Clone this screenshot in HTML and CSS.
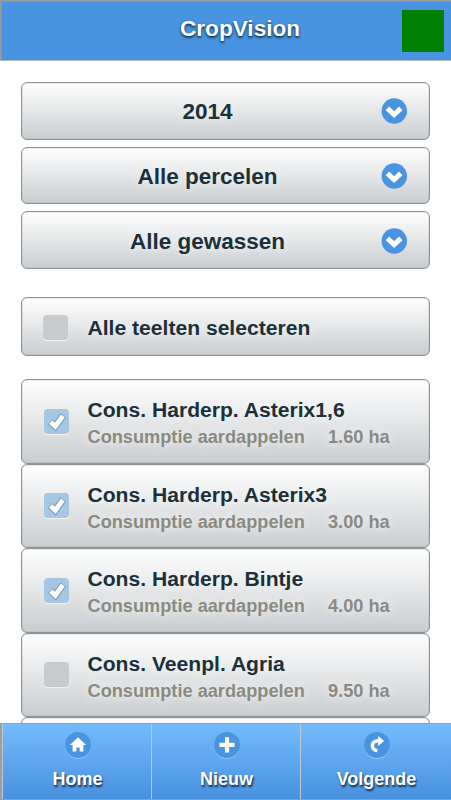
FILE: index.html
```html
<!DOCTYPE html>
<html lang="nl">
<head>
<meta charset="utf-8">
<title>CropVision</title>
<link rel="stylesheet" href="styles.css">
</head>
<body>
<svg class="defs" width="0" height="0">
  <symbol id="chevron" viewBox="0 0 26 26"><circle cx="13.3" cy="13" r="12.7" fill="#4894e0"/><path d="M6.4 10.4l6.7 6.2 6.7-6.2" fill="none" stroke="#fff" stroke-width="5"/></symbol>
  <symbol id="tick" viewBox="0 0 26 26"><path d="M6.4 12.7l4.9 4.7 7.8-11" fill="none" stroke="#60788a" stroke-opacity=".3" stroke-width="7.4"/><path d="M6.4 12.7l4.9 4.7 7.8-11" fill="none" stroke="#60788a" stroke-opacity=".5" stroke-width="6"/><path d="M6.7 13l4.6 4.4 7.5-10.6" fill="none" stroke="#fff" stroke-width="4.8"/></symbol>
</svg>
<div class="screen">
  <header class="header"><h1 class="title">CropVision</h1><span class="status"></span></header>
  <main class="content">
    <div class="selects">
      <div class="select"><span>2014</span><svg class="arrow"><use href="#chevron"/></svg></div>
      <div class="select"><span>Alle percelen</span><svg class="arrow"><use href="#chevron"/></svg></div>
      <div class="select"><span>Alle gewassen</span><svg class="arrow"><use href="#chevron"/></svg></div>
    </div>
    <div class="select-all"><span class="box"></span><span class="name">Alle teelten selecteren</span></div>
    <div class="list">
      <div class="item"><span class="box on"><svg class="check"><use href="#tick"/></svg></span><div><div class="name">Cons. Harderp. Asterix1,6</div><div class="sub"><span class="crop">Consumptie aardappelen</span><span>1.60 ha</span></div></div></div>
      <div class="item"><span class="box on"><svg class="check"><use href="#tick"/></svg></span><div><div class="name">Cons. Harderp. Asterix3</div><div class="sub"><span class="crop">Consumptie aardappelen</span><span>3.00 ha</span></div></div></div>
      <div class="item"><span class="box on"><svg class="check"><use href="#tick"/></svg></span><div><div class="name">Cons. Harderp. Bintje</div><div class="sub"><span class="crop">Consumptie aardappelen</span><span>4.00 ha</span></div></div></div>
      <div class="item"><span class="box"></span><div><div class="name">Cons. Veenpl. Agria</div><div class="sub"><span class="crop">Consumptie aardappelen</span><span>9.50 ha</span></div></div></div>
      <div class="item"></div>
    </div>
  </main>
  <nav class="footer">
    <a class="tab"><svg class="icon" viewBox="0 0 26 26"><path d="M13 5.3L4.9 13.1h2.7v6.5h3.8v-4h3.2v4h3.8v-6.5h2.7z" fill="#fff"/></svg><span>Home</span></a>
    <a class="tab"><svg class="icon" viewBox="0 0 26 26"><path d="M13 5.3v15.2M5.4 12.9h15.2" stroke="#fff" stroke-width="4.2"/></svg><span>Nieuw</span></a>
    <a class="tab"><svg class="icon" viewBox="0 0 26 26"><path d="M13.4 18.6C6.3 18.2 6.6 8.6 14.6 8.8" fill="none" stroke="#fff" stroke-width="3.5"/><path d="M14.2 4l6 5-6 5z" fill="#fff"/></svg><span>Volgende</span></a>
  </nav>
</div>
</body>
</html>
```
FILE: styles.css
```css
* { box-sizing: border-box; }
body {
  margin: 0;
  background: #fff;
  color: #1c303a;
  font-family: "Liberation Sans", Arial, sans-serif;
  font-weight: bold;
}
.defs { display: none; }
.screen {
  display: flex;
  flex-direction: column;
  height: 800px;
  overflow: hidden;
}
.header {
  display: grid;
  grid-template-columns: 151px auto 1fr;
  align-items: start;
  flex: none;
  height: 61px;
  border: 1px solid #999c9a;
  border-right: 0;
  border-bottom-color: #b4b9bd;
  background: #4894e0;
  box-shadow: inset 1px 1px 0 #999c9a80;
}
.title {
  grid-column: 2;
  margin: 14px 0 0 28px;
  color: #fff;
  font-size: 22.6px;
  line-height: 27px;
  text-shadow: 0 1px 2px #102d4c, 0 2px 3px #24598e;
}
.status {
  justify-self: end;
  width: 42px;
  height: 42px;
  margin: 9px 7px 0 0;
  background: #008000;
}
.content {
  flex: 1;
  min-height: 0;
  overflow: hidden;
  padding: 21px 21px 0;
}
.selects {
  display: flex;
  flex-direction: column;
  gap: 7px;
}
.select, .select-all, .item {
  border: 1px solid #8f9596;
  border-radius: 6px;
  background: linear-gradient(#fff, #c9cdd0);
  box-shadow: inset 0 0 0 .5px #92989860;
}
.select {
  display: grid;
  grid-template-columns: 24px 1fr 48px;
  align-items: center;
  height: 57.7px;
  font-size: 22.5px;
  line-height: 28px;
  text-align: center;
  text-shadow: 0 0 9px #f2f6f9;
}
.select span {
  grid-column: 2;
  margin-left: 3px;
  padding: 3px 15px 0 0;
}
.arrow {
  width: 26px;
  height: 26px;
  margin-top: 1px;
}
.select-all, .item {
  display: flex;
  align-items: center;
  text-shadow: 0 0 9px #f4f7fa;
}
.select-all {
  height: 59px;
  margin-top: 28px;
  padding-left: 21px;
}
.box {
  flex: none;
  width: 25px;
  height: 25px;
  margin: -4px 19px 0 0;
  border-radius: 4px;
  background: #c9cacc;
  box-shadow: 0 1px 1px #f3f5f6;
}
.select-all .box { margin: 1px 19.5px 0 0; }
.select-all .name { padding-top: 3px; }
.box.on {
  background: #a4c7e5;
}
.check {
  display: block;
  width: 26px;
  height: 26px;
}
.name {
  font-size: 21.1px;
  line-height: 28px;
  white-space: pre;
}
.list { margin-top: 23px; }
.item {
  height: 84.5px;
  padding: 4px 0 0 21.5px;
}
.sub {
  display: flex;
  color: #8a8a80;
  font-size: 18.2px;
  line-height: 26px;
}
.crop { width: 240.5px; }
.footer {
  display: grid;
  grid-template-columns: 149px 149px 1fr;
  flex: none;
  height: 77px;
  border: solid #999fa5;
  border-width: 1px 0 1px 2px;
}
.tab {
  display: flex;
  flex-direction: column;
  align-items: center;
  padding-top: 8px;
  border-left: 1px solid #c0c8d0;
  background: linear-gradient(#74bbfd, #4891df);
  color: #fff;
  font-size: 18px;
  line-height: 24px;
  text-shadow: 1px 2px 2px #102b44;
}
.tab span { margin: 9px 0 0 1px; }
.icon {
  width: 26px;
  height: 26px;
  margin-left: 1px;
  border-radius: 50%;
  background: #4894e0;
  box-shadow: 0 1px 0 #91c4f5;
}
```
